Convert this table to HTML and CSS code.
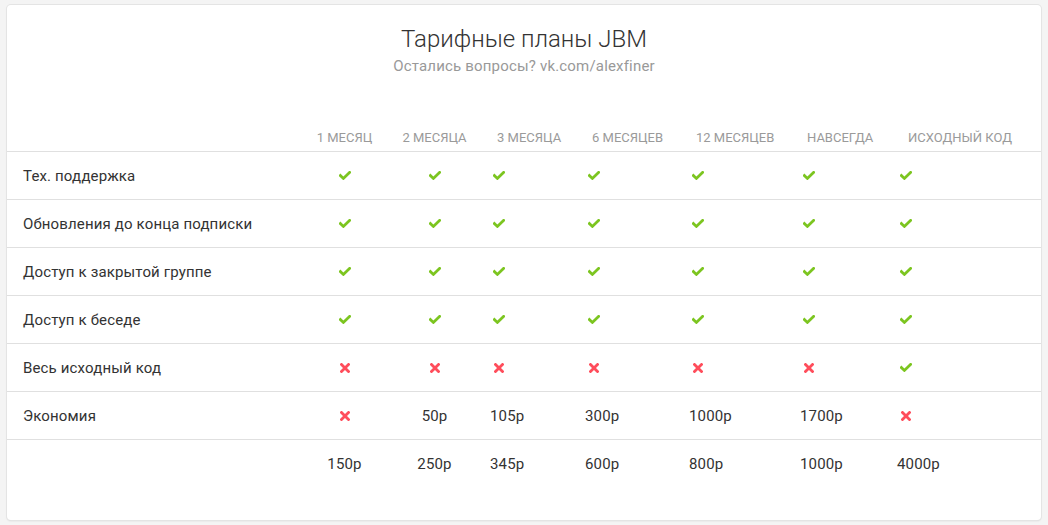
FILE: index.html
```html
<!DOCTYPE html>
<html lang="ru">
<head>
<meta charset="utf-8">
<title>Тарифные планы JBM</title>
<link rel="stylesheet" href="styles.css">
</head>
<body>
<div class="card">
  <h1 class="title">Тарифные планы JBM</h1>
  <p class="subtitle">Остались вопросы? vk.com/alexfiner</p>
  <div class="grid">
    <div class="th"></div>
    <div class="th c">1 месяц</div>
    <div class="th c">2 месяца</div>
    <div class="th">3 месяца</div>
    <div class="th">6 месяцев</div>
    <div class="th">12 месяцев</div>
    <div class="th">навсегда</div>
    <div class="th last">исходный код</div>

    <div class="td label">Тех. поддержка</div>
    <div class="td c"><span class="ic yes"><svg viewBox="0 0 12 9" width="12" height="9"><path d="M1.4 4.6 L4.4 7.4 L10.6 1.4"/></svg></span></div>
    <div class="td c"><span class="ic yes"><svg viewBox="0 0 12 9" width="12" height="9"><path d="M1.4 4.6 L4.4 7.4 L10.6 1.4"/></svg></span></div>
    <div class="td"><span class="ic yes"><svg viewBox="0 0 12 9" width="12" height="9"><path d="M1.4 4.6 L4.4 7.4 L10.6 1.4"/></svg></span></div>
    <div class="td"><span class="ic yes"><svg viewBox="0 0 12 9" width="12" height="9"><path d="M1.4 4.6 L4.4 7.4 L10.6 1.4"/></svg></span></div>
    <div class="td"><span class="ic yes"><svg viewBox="0 0 12 9" width="12" height="9"><path d="M1.4 4.6 L4.4 7.4 L10.6 1.4"/></svg></span></div>
    <div class="td"><span class="ic yes"><svg viewBox="0 0 12 9" width="12" height="9"><path d="M1.4 4.6 L4.4 7.4 L10.6 1.4"/></svg></span></div>
    <div class="td w"><span class="ic yes"><svg viewBox="0 0 12 9" width="12" height="9"><path d="M1.4 4.6 L4.4 7.4 L10.6 1.4"/></svg></span></div>

    <div class="td label">Обновления до конца подписки</div>
    <div class="td c"><span class="ic yes"><svg viewBox="0 0 12 9" width="12" height="9"><path d="M1.4 4.6 L4.4 7.4 L10.6 1.4"/></svg></span></div>
    <div class="td c"><span class="ic yes"><svg viewBox="0 0 12 9" width="12" height="9"><path d="M1.4 4.6 L4.4 7.4 L10.6 1.4"/></svg></span></div>
    <div class="td"><span class="ic yes"><svg viewBox="0 0 12 9" width="12" height="9"><path d="M1.4 4.6 L4.4 7.4 L10.6 1.4"/></svg></span></div>
    <div class="td"><span class="ic yes"><svg viewBox="0 0 12 9" width="12" height="9"><path d="M1.4 4.6 L4.4 7.4 L10.6 1.4"/></svg></span></div>
    <div class="td"><span class="ic yes"><svg viewBox="0 0 12 9" width="12" height="9"><path d="M1.4 4.6 L4.4 7.4 L10.6 1.4"/></svg></span></div>
    <div class="td"><span class="ic yes"><svg viewBox="0 0 12 9" width="12" height="9"><path d="M1.4 4.6 L4.4 7.4 L10.6 1.4"/></svg></span></div>
    <div class="td w"><span class="ic yes"><svg viewBox="0 0 12 9" width="12" height="9"><path d="M1.4 4.6 L4.4 7.4 L10.6 1.4"/></svg></span></div>

    <div class="td label">Доступ к закрытой группе</div>
    <div class="td c"><span class="ic yes"><svg viewBox="0 0 12 9" width="12" height="9"><path d="M1.4 4.6 L4.4 7.4 L10.6 1.4"/></svg></span></div>
    <div class="td c"><span class="ic yes"><svg viewBox="0 0 12 9" width="12" height="9"><path d="M1.4 4.6 L4.4 7.4 L10.6 1.4"/></svg></span></div>
    <div class="td"><span class="ic yes"><svg viewBox="0 0 12 9" width="12" height="9"><path d="M1.4 4.6 L4.4 7.4 L10.6 1.4"/></svg></span></div>
    <div class="td"><span class="ic yes"><svg viewBox="0 0 12 9" width="12" height="9"><path d="M1.4 4.6 L4.4 7.4 L10.6 1.4"/></svg></span></div>
    <div class="td"><span class="ic yes"><svg viewBox="0 0 12 9" width="12" height="9"><path d="M1.4 4.6 L4.4 7.4 L10.6 1.4"/></svg></span></div>
    <div class="td"><span class="ic yes"><svg viewBox="0 0 12 9" width="12" height="9"><path d="M1.4 4.6 L4.4 7.4 L10.6 1.4"/></svg></span></div>
    <div class="td w"><span class="ic yes"><svg viewBox="0 0 12 9" width="12" height="9"><path d="M1.4 4.6 L4.4 7.4 L10.6 1.4"/></svg></span></div>

    <div class="td label">Доступ к беседе</div>
    <div class="td c"><span class="ic yes"><svg viewBox="0 0 12 9" width="12" height="9"><path d="M1.4 4.6 L4.4 7.4 L10.6 1.4"/></svg></span></div>
    <div class="td c"><span class="ic yes"><svg viewBox="0 0 12 9" width="12" height="9"><path d="M1.4 4.6 L4.4 7.4 L10.6 1.4"/></svg></span></div>
    <div class="td"><span class="ic yes"><svg viewBox="0 0 12 9" width="12" height="9"><path d="M1.4 4.6 L4.4 7.4 L10.6 1.4"/></svg></span></div>
    <div class="td"><span class="ic yes"><svg viewBox="0 0 12 9" width="12" height="9"><path d="M1.4 4.6 L4.4 7.4 L10.6 1.4"/></svg></span></div>
    <div class="td"><span class="ic yes"><svg viewBox="0 0 12 9" width="12" height="9"><path d="M1.4 4.6 L4.4 7.4 L10.6 1.4"/></svg></span></div>
    <div class="td"><span class="ic yes"><svg viewBox="0 0 12 9" width="12" height="9"><path d="M1.4 4.6 L4.4 7.4 L10.6 1.4"/></svg></span></div>
    <div class="td w"><span class="ic yes"><svg viewBox="0 0 12 9" width="12" height="9"><path d="M1.4 4.6 L4.4 7.4 L10.6 1.4"/></svg></span></div>

    <div class="td label">Весь исходный код</div>
    <div class="td c"><span class="ic no"><svg viewBox="0 0 10 10" width="10" height="10"><path d="M1.5 1.5 L8.5 8.5 M8.5 1.5 L1.5 8.5"/></svg></span></div>
    <div class="td c"><span class="ic no"><svg viewBox="0 0 10 10" width="10" height="10"><path d="M1.5 1.5 L8.5 8.5 M8.5 1.5 L1.5 8.5"/></svg></span></div>
    <div class="td"><span class="ic no"><svg viewBox="0 0 10 10" width="10" height="10"><path d="M1.5 1.5 L8.5 8.5 M8.5 1.5 L1.5 8.5"/></svg></span></div>
    <div class="td"><span class="ic no"><svg viewBox="0 0 10 10" width="10" height="10"><path d="M1.5 1.5 L8.5 8.5 M8.5 1.5 L1.5 8.5"/></svg></span></div>
    <div class="td"><span class="ic no"><svg viewBox="0 0 10 10" width="10" height="10"><path d="M1.5 1.5 L8.5 8.5 M8.5 1.5 L1.5 8.5"/></svg></span></div>
    <div class="td"><span class="ic no"><svg viewBox="0 0 10 10" width="10" height="10"><path d="M1.5 1.5 L8.5 8.5 M8.5 1.5 L1.5 8.5"/></svg></span></div>
    <div class="td w"><span class="ic yes"><svg viewBox="0 0 12 9" width="12" height="9"><path d="M1.4 4.6 L4.4 7.4 L10.6 1.4"/></svg></span></div>

    <div class="td label">Экономия</div>
    <div class="td c"><span class="ic no"><svg viewBox="0 0 10 10" width="10" height="10"><path d="M1.5 1.5 L8.5 8.5 M8.5 1.5 L1.5 8.5"/></svg></span></div>
    <div class="td c">50р</div>
    <div class="td">105р</div>
    <div class="td">300р</div>
    <div class="td">1000р</div>
    <div class="td">1700р</div>
    <div class="td w"><span class="ic no"><svg viewBox="0 0 10 10" width="10" height="10"><path d="M1.5 1.5 L8.5 8.5 M8.5 1.5 L1.5 8.5"/></svg></span></div>

    <div class="td label"></div>
    <div class="td c">150р</div>
    <div class="td c">250р</div>
    <div class="td">345р</div>
    <div class="td">600р</div>
    <div class="td">800р</div>
    <div class="td">1000р</div>
    <div class="td w">4000р</div>
  </div>
</div>
</body>
</html>
```

FILE: styles.css
```css
* { box-sizing: border-box; }

html, body {
  margin: 0;
  padding: 0;
}

body {
  background: #f4f4f4;
  font-family: Roboto, "Noto Sans", "Liberation Sans", sans-serif;
  color: #333;
  padding: 5px 7px;
}

.card {
  background: #fff;
  width: 1034px;
  height: 515px;
  border-radius: 4px;
  box-shadow: 0 0 0 1px #e4e4e4, 0 1px 2px rgba(0, 0, 0, 0.12);
  padding-top: 18px;
}

.title {
  margin: 0;
  font-size: 24px;
  line-height: 32px;
  font-weight: 300;
  text-align: center;
  color: #333;
}

.subtitle {
  margin: 1px 0 0;
  font-size: 15px;
  line-height: 20px;
  letter-spacing: 0.18px;
  text-align: center;
  color: #999;
}

.grid {
  margin-top: 54px;
  display: grid;
  grid-template-columns: 295px 85px 95px 95px 104px 111px 96px 1fr;
}

.th {
  font-size: 13px;
  line-height: 16px;
  text-transform: uppercase;
  color: #9a9a9a;
  padding: 0 0 5px 15px;
  white-space: nowrap;
}

.th.c { padding-left: 0; text-align: center; }
.th.last { padding-left: 20px; }

.td {
  height: 48px;
  border-top: 1px solid #e0e0e0;
  display: flex;
  align-items: center;
  padding-left: 8px;
  font-size: 15px;
  letter-spacing: 0.15px;
  color: #333;
}

.td.c { justify-content: center; padding-left: 0; }
.td.label { padding-left: 16px; }
.td.w { padding-left: 9px; }

.ic {
  display: inline-flex;
  justify-content: center;
  align-items: center;
  width: 18px;
}

.td.c .ic { width: auto; }

.ic svg { display: block; fill: none; }

.ic.yes svg path {
  stroke: #7cc520;
  stroke-width: 2.8;
  stroke-linecap: square;
  stroke-linejoin: miter;
}

.ic.no svg path {
  stroke: #ff4d5b;
  stroke-width: 2.8;
  stroke-linecap: square;
}
```
